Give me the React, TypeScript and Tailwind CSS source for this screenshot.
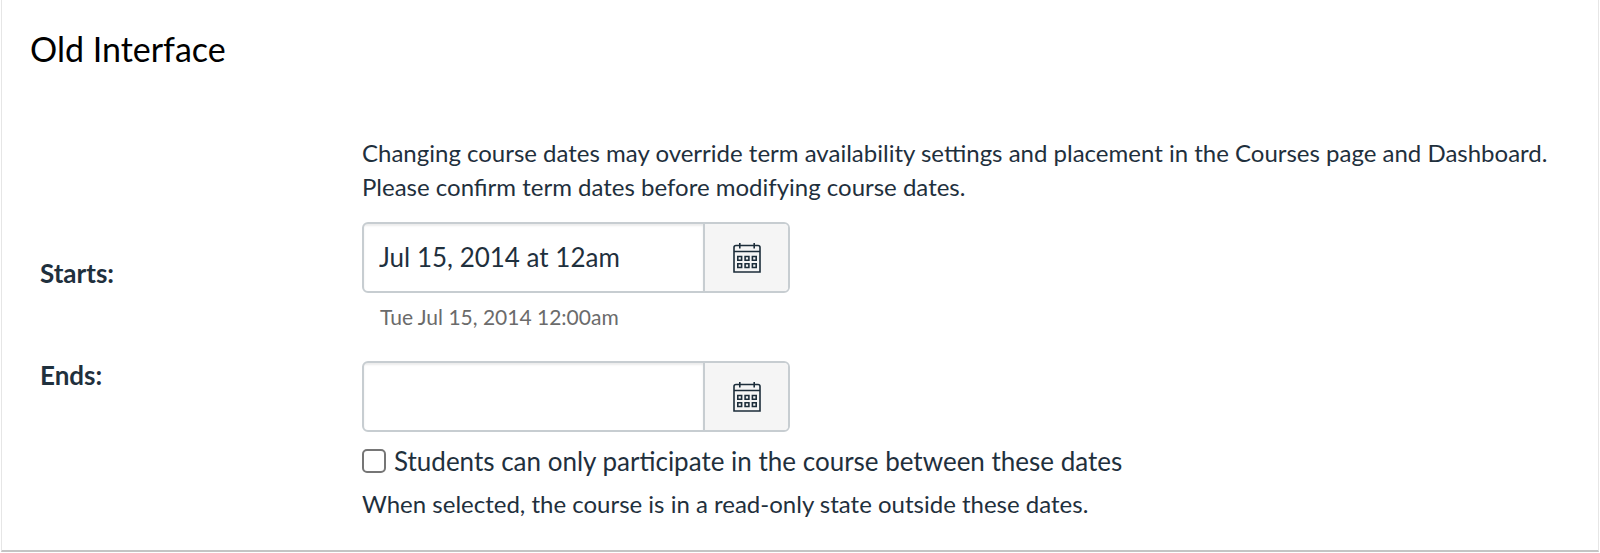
import { useState } from "react";

function CalendarIcon() {
  return (
    <svg width="28" height="30" viewBox="0 0 28 30" fill="none" stroke="#1c2d3a" strokeWidth="1.6" aria-hidden="true">
      <path d="M1 29V4.5Q1 2.5 3 2.5H25Q27 2.5 27 4.5V29ZM1 8.5H27M6.8 0V5.5M21.2 0V5.5" />
      <path d="M4.8 13.5h3.8v3.8H4.8zM12.1 13.5h3.8v3.8h-3.8zM19.4 13.5h3.8v3.8h-3.8zM4.8 20.7h3.8v3.8H4.8zM12.1 20.7h3.8v3.8h-3.8zM19.4 20.7h3.8v3.8h-3.8z" />
    </svg>
  );
}

function DateField({ id, initial, label }: { id: string; initial: string; label: string }) {
  const [value, setValue] = useState(initial);
  return (
    <div className="flex h-[71px] w-[428px] max-w-full overflow-hidden rounded-[6px] border-2 border-[#c7cdd1]">
      <input
        id={id}
        type="text"
        value={value}
        onChange={(e) => setValue(e.target.value)}
        className="min-w-0 flex-1 px-[15px] text-[26px] shadow-[inset_0_2px_2px_rgba(0,0,0,0.08)] outline-none"
      />
      <button
        type="button"
        aria-label={label}
        className="flex w-[85px] items-center justify-center border-l-2 border-[#c7cdd1] bg-[#f5f5f5]"
      >
        <CalendarIcon />
      </button>
    </div>
  );
}

export default function App() {
  const [limited, setLimited] = useState(false);
  return (
    <main className="mx-px border-x border-b-2 border-x-[#e6e6e6] border-b-[#c4c4c4] bg-white px-7 pt-[29px] pb-[29px] font-[Lato,sans-serif] text-[#1f303d]">
      <h1 className="text-[34px] leading-10 text-black">Old Interface</h1>
      <div className="mt-[67px] grid grid-cols-[322px_1fr] pl-[10px]">
        <p className="col-start-2 text-[24px] leading-[34px]">
          Changing course dates may override term availability settings and placement in the Courses page and Dashboard.
          <br />
          Please confirm term dates before modifying course dates.
        </p>
      </div>
      <div className="mt-[18px] grid grid-cols-[322px_1fr] pl-[10px]">
        <label htmlFor="starts" className="pt-8 text-[26px] font-bold">
          Starts:
        </label>
        <div>
          <DateField id="starts" initial="Jul 15, 2014 at 12am" label="Choose start date" />
          <p className="mt-[10px] pl-[18px] text-[21px] leading-7 text-[#6b6b6b]">Tue Jul 15, 2014 12:00am</p>
        </div>
      </div>
      <div className="mt-[25px] grid grid-cols-[322px_1fr] pl-[10px]">
        <label htmlFor="ends" className="text-[26px] font-bold">
          Ends:
        </label>
        <div className="pt-[5px]">
          <DateField id="ends" initial="" label="Choose end date" />
          <label className="mt-[11px] flex items-center gap-2 text-[26px] leading-9">
            <input
              type="checkbox"
              checked={limited}
              onChange={(e) => setLimited(e.target.checked)}
              className="size-6 shrink-0 appearance-none rounded-[5px] border-2 border-[#767676] bg-white checked:bg-[#2d3b45]"
            />
            Students can only participate in the course between these dates
          </label>
          <p className="mt-2 text-[24px] leading-[34px]">
            When selected, the course is in a read-only state outside these dates.
          </p>
        </div>
      </div>
    </main>
  );
}
